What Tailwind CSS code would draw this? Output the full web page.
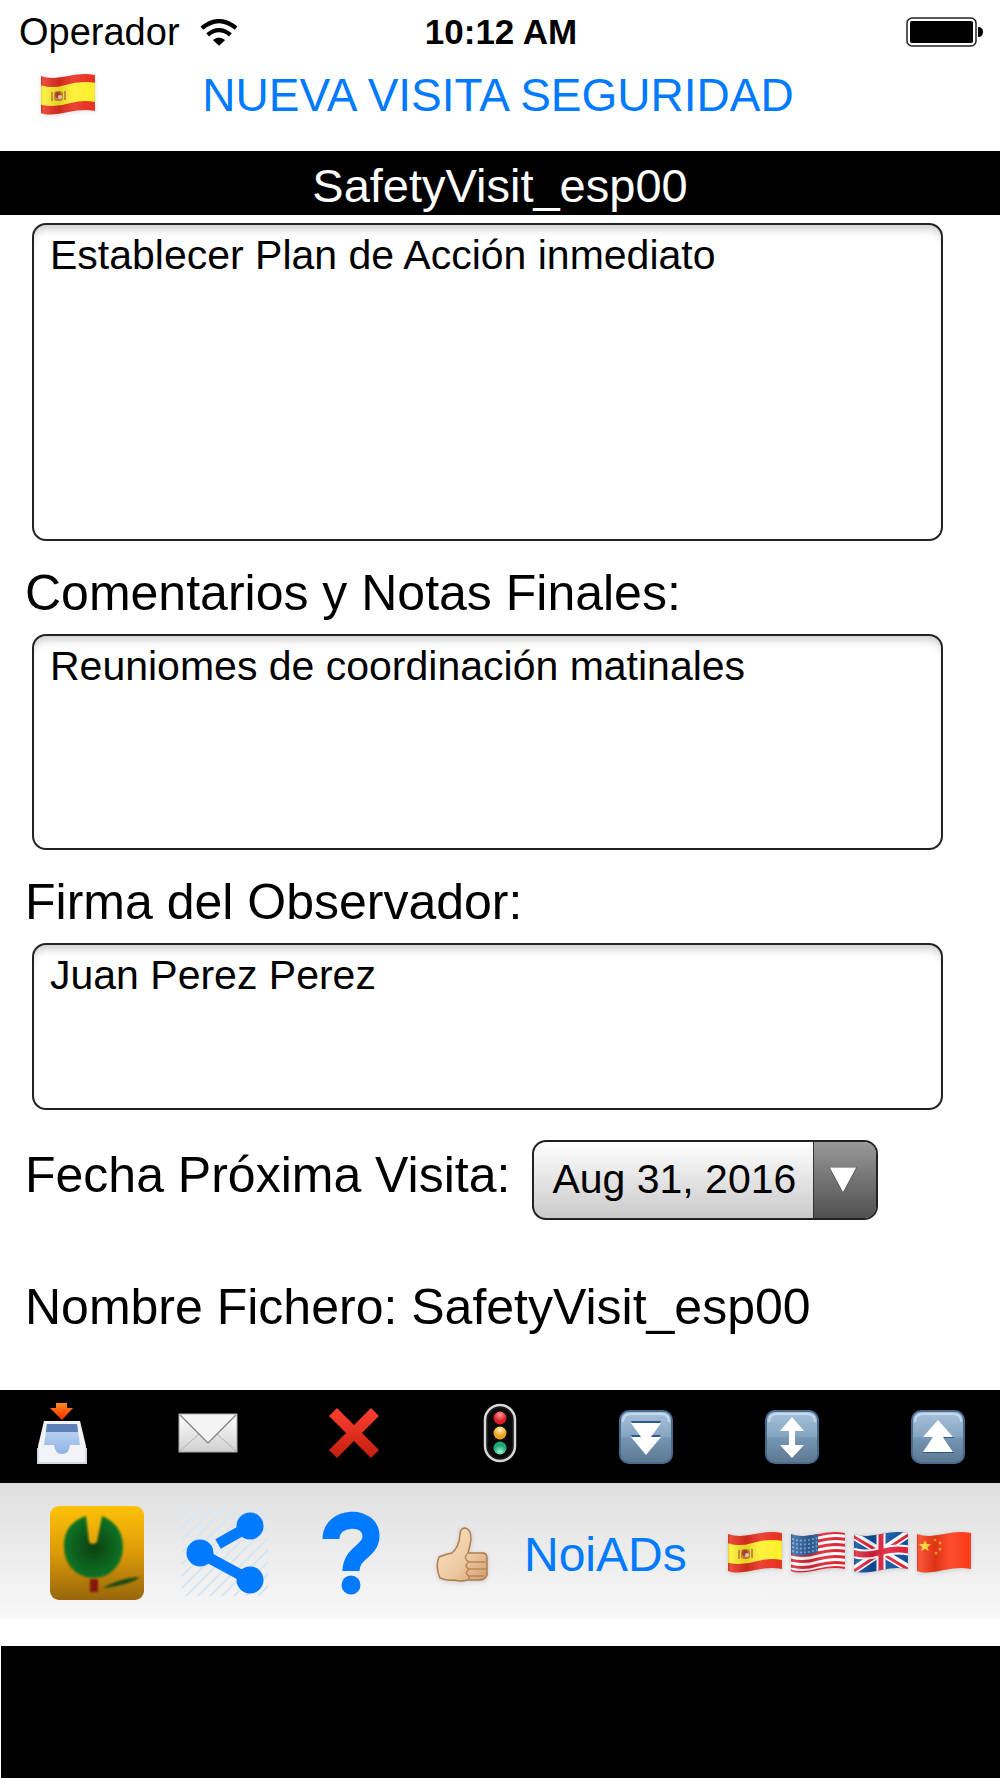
<!DOCTYPE html>
<html lang="es">
<head>
    <meta charset="UTF-8">
    <meta name="viewport" content="width=device-width, initial-scale=1">
    <title>SafetyVisit - Nueva Visita Seguridad</title>
    <script src="https://cdn.jsdelivr.net/npm/@tailwindcss/browser@4"></script>
</head>
<body class="min-h-screen flex flex-col bg-white text-black font-['Liberation_Sans',Arial,sans-serif]">

    <!-- Shared flag and button artwork -->
    <svg class="absolute w-0 h-0" aria-hidden="true" xmlns="http://www.w3.org/2000/svg">
        <defs>
            <path id="wave" d="M-2 3 C8 7 18 6 28 3 S46 -1 58 2" fill="none" />
            <clipPath id="flagClip">
                <path d="M1 3 C9 6 18 5 28 3 S46 0 55 2 V38 C46 36 38 37 28 39 S9 43 1 40 Z" />
            </clipPath>
            <linearGradient id="cloth" x1="0" x2="1" y1="0" y2="0">
                <stop offset="0" stop-color="#000" stop-opacity=".2" />
                <stop offset=".06" stop-color="#fff" stop-opacity=".15" />
                <stop offset=".35" stop-color="#000" stop-opacity=".12" />
                <stop offset=".6" stop-color="#fff" stop-opacity=".1" />
                <stop offset=".95" stop-color="#fff" stop-opacity="0" />
                <stop offset="1" stop-color="#000" stop-opacity=".3" />
            </linearGradient>
            <linearGradient id="tile" x1="0" x2="0" y1="0" y2="1">
                <stop offset="0" stop-color="#a9c3dc" />
                <stop offset=".48" stop-color="#86a5c2" />
                <stop offset=".52" stop-color="#7596b5" />
                <stop offset="1" stop-color="#5c7791" />
            </linearGradient>
            <symbol id="flag-es" viewBox="0 0 56 44">
                <g clip-path="url(#flagClip)">
                    <rect width="56" height="44" fill="#e8301f" />
                    <use href="#wave" y="18" stroke="#fff02a" stroke-width="19" />
                    <rect x="14" y="18" width="9" height="10" rx="3" fill="#e08a2a" />
                    <rect x="11" y="19" width="2" height="9" fill="#d09040" />
                    <rect x="24" y="18" width="2" height="9" fill="#d09040" />
                    <circle cx="18" cy="22" r="3" fill="#b8452c" />
                    <circle cx="20" cy="24" r="2" fill="#ecdcd8" />
                    <rect width="56" height="44" fill="url(#cloth)" />
                </g>
            </symbol>
            <symbol id="flag-us" viewBox="0 0 56 44">
                <g clip-path="url(#flagClip)">
                    <rect width="56" height="44" fill="#fff" />
                    <g stroke="#dd2230" stroke-width="3">
                        <use href="#wave" y="1" />
                        <use href="#wave" y="7" />
                        <use href="#wave" y="13" />
                        <use href="#wave" y="19" />
                        <use href="#wave" y="25" />
                        <use href="#wave" y="31" />
                        <use href="#wave" y="36" />
                    </g>
                    <path d="M0 0 H28 V21 C18 25 8 26 0 23 Z" fill="#2d62a0" />
                    <path d="M2 8 C12 11 20 9 27 7 M2 12 C12 15 20 13 27 11 M2 16 C12 19 20 17 27 15 M2 20 C12 23 20 21 27 19" fill="none" stroke="#7ba3cc" stroke-width="2" stroke-dasharray="2 2" />
                    <rect width="56" height="44" fill="url(#cloth)" />
                </g>
            </symbol>
            <symbol id="flag-gb" viewBox="0 0 56 44">
                <g clip-path="url(#flagClip)">
                    <rect width="56" height="44" fill="#0b4f9e" />
                    <path d="M-2 3 L58 39 M-2 41 L58 1" stroke="#fff" stroke-width="8" />
                    <path d="M-2 4 L58 40 M-2 42 L58 2" stroke="#e0203a" stroke-width="3" />
                    <use href="#wave" y="18" stroke="#fff" stroke-width="10" />
                    <path d="M28 0 V44" stroke="#fff" stroke-width="9" />
                    <use href="#wave" y="18" stroke="#e0203a" stroke-width="6" />
                    <path d="M28 0 V44" stroke="#e0203a" stroke-width="5" />
                    <rect width="56" height="44" fill="url(#cloth)" />
                </g>
            </symbol>
            <symbol id="flag-cn" viewBox="0 0 56 44">
                <g clip-path="url(#flagClip)">
                    <rect width="56" height="44" fill="#fb3a17" />
                    <path d="M9 9 L10.600 13 L15 13.300 L11.600 16 L12.800 20 L9 17.800 L5 20 L6.300 16 L3 13.300 L7.400 13 Z" fill="#ffe02a" />
                    <g fill="#f9a61c">
                        <circle cx="19" cy="9" r="1.500" />
                        <circle cx="24" cy="12" r="1.500" />
                        <circle cx="24" cy="18" r="1.500" />
                        <circle cx="20" cy="22" r="1.500" />
                    </g>
                    <rect width="56" height="44" fill="url(#cloth)" />
                </g>
            </symbol>
            <symbol id="tile-bg" viewBox="0 0 54 54">
                <rect x="1" y="1" width="52" height="52" rx="9" fill="url(#tile)" stroke="#4a6a8c" stroke-width="2" />
                <path d="M4 12 Q4 4 12 4 H42 Q50 4 50 12" fill="none" stroke="#c6d9ea" stroke-width="2" />
            </symbol>
        </defs>
    </svg>

    <!-- Status bar -->
    <div class="h-16 pl-[19px] pr-[17px] grid grid-cols-[1fr_auto_1fr] items-center">
        <div class="flex items-center gap-5 text-[38px]">
            <span>Operador</span>
            <svg class="w-[38px] h-[27px] shrink-0" viewBox="0 0 40 28" fill="none" stroke="#000" stroke-width="4.500">
                <path d="M2 9.500 Q20 -5.500 38 9.500" />
                <path d="M8 16.500 Q20 6.500 32 16.500" />
                <path d="M13.500 22 Q20 16.500 26.500 22 L20 28 Z" fill="#000" stroke="none" />
            </svg>
        </div>
        <span class="text-center text-[35px] font-bold">10:12 AM</span>
        <svg class="w-[77px] h-[30px] justify-self-end" viewBox="0 0 77 30">
            <rect x="1" y="1" width="69" height="28" rx="5" fill="none" stroke="#222" stroke-width="1.500" />
            <rect x="4" y="4" width="63" height="22" rx="2" fill="#000" />
            <path d="M72 10 Q77 10 77 15 T72 20 Z" fill="#000" />
        </svg>
    </div>

    <!-- Title -->
    <header>
        <div class="h-[87px] pb-[26px] px-10 flex items-center">
            <button type="button" aria-label="Idioma: español" class="shrink-0">
                <svg class="w-14 h-11 drop-shadow-sm"><use href="#flag-es" /></svg>
            </button>
            <h1 class="flex-1 pr-15 text-center text-[46px] leading-[60px] text-[#007aff]">NUEVA VISITA SEGURIDAD</h1>
        </div>
        <p class="h-16 pt-[6px] flex items-center justify-center bg-black text-white text-[47px]">SafetyVisit_esp00</p>
    </header>

    <!-- Visit form -->
    <form class="pt-2 text-[50px]">
        <div class="pl-8 pr-[57px]">
            <textarea aria-label="Plan de Acción" class="block w-full h-[318px] px-4 py-[7px] border-2 border-[#222] rounded-[14px] resize-none text-[41px] leading-[46px] shadow-[inset_0_8px_8px_-4px_#ccc]">Establecer Plan de Acción inmediato</textarea>
        </div>

        <label for="comentarios" class="block px-[25px] pt-3 leading-[81px]">Comentarios y Notas Finales:</label>
        <div class="pl-8 pr-[57px]">
            <textarea id="comentarios" class="block w-full h-[216px] px-4 py-[7px] border-2 border-[#222] rounded-[14px] resize-none text-[41px] leading-[46px] shadow-[inset_0_8px_8px_-4px_#ccc]">Reuniomes de coordinación matinales</textarea>
        </div>

        <label for="firma" class="block px-[25px] pt-3 leading-[81px]">Firma del Observador:</label>
        <div class="pl-8 pr-[57px]">
            <textarea id="firma" class="block w-full h-[167px] px-4 py-[7px] border-2 border-[#222] rounded-[14px] resize-none text-[41px] leading-[46px] shadow-[inset_0_8px_8px_-4px_#ccc]">Juan Perez Perez</textarea>
        </div>

        <div class="mt-[30px] px-[25px] flex items-start gap-[22px]">
            <label for="fecha" class="leading-[70px]">Fecha Próxima Visita:</label>
            <div class="relative">
                <select id="fecha" class="appearance-none block w-[346px] h-20 pl-[18px] pb-px border-2 border-[#222] rounded-[14px] bg-linear-to-b from-white to-[#cacaca] text-[41px]">
                    <option>Aug 31, 2016</option>
                </select>
                <span class="absolute inset-y-[2px] right-[2px] w-[63px] pr-1 flex items-center justify-center rounded-r-xl border-l border-[#333] bg-linear-to-b from-[#999] to-[#505050] pointer-events-none">
                    <svg class="w-7 h-[26px]" viewBox="0 0 28 26"><path d="M0 0 H28 L14 26 Z" fill="#fff" stroke="#555" stroke-width="1" /></svg>
                </span>
            </div>
        </div>

        <p class="px-[25px] pt-[58px] pb-[54px] leading-[58px]">Nombre Fichero: SafetyVisit_esp00</p>
    </form>

    <!-- Actions -->
    <nav class="h-[93px] px-8 pb-2 flex items-center justify-between bg-black">
        <button type="button" aria-label="Guardar" class="w-15 flex justify-center">
            <svg class="w-[50px] h-[62px]" viewBox="0 0 50 62">
                <defs>
                    <linearGradient id="arrow" x2="0" y2="1"><stop stop-color="#ff8a1c" /><stop offset="1" stop-color="#ff2a00" /></linearGradient>
                    <linearGradient id="tray" x2="0" y2="1"><stop stop-color="#6d93cc" /><stop offset=".3" stop-color="#b6cff0" /><stop offset="1" stop-color="#8fb2e6" /></linearGradient>
                </defs>
                <path d="M7 19 H43 L49 44 V61 H1 V44 Z" fill="#f1f3f6" />
                <path d="M10 22 H40 L43 43 H33 Q32 52 25 52 T17 43 H7 Z" fill="url(#tray)" />
                <path d="M10 22 H40 L41 30 H9 Z" fill="#5c80b8" />
                <path d="M1 46 V61 H49 V46" fill="none" stroke="#d5d9df" stroke-width="2" />
                <path d="M19 1 H30 V6 H36 L25 18 L13 6 H19 Z" fill="url(#arrow)" />
            </svg>
        </button>
        <button type="button" aria-label="Enviar" class="w-15 flex justify-center">
            <svg class="w-15 h-10" viewBox="0 0 60 40">
                <defs><linearGradient id="paper" x2="0" y2="1"><stop stop-color="#fff" /><stop offset="1" stop-color="#d0d0d0" /></linearGradient></defs>
                <rect x="1" y="1" width="58" height="38" fill="url(#paper)" stroke="#aaa" />
                <path d="M2 38 L21 21 M58 38 L39 21" stroke="#b0b0b0" stroke-width="1" />
                <path d="M2 2 L30 30 L58 2" fill="#f4f4f4" stroke="#8c8c8c" stroke-width="1.500" />
            </svg>
        </button>
        <button type="button" aria-label="Borrar" class="w-15 flex justify-center">
            <svg class="w-[52px] h-[52px]" viewBox="0 0 52 52">
                <defs><linearGradient id="cross" x2="0" y2="1"><stop stop-color="#fb4030" /><stop offset="1" stop-color="#c41e10" /></linearGradient></defs>
                <path d="M9 1 L26 18 L43 1 L51 9 L34 26 L51 43 L43 51 L26 34 L9 51 L1 43 L18 26 L1 9 Z" fill="url(#cross)" />
            </svg>
        </button>
        <button type="button" aria-label="Estado" class="w-15 flex justify-center">
            <svg class="w-[34px] h-[60px]" viewBox="0 0 34 60">
                <defs>
                    <radialGradient id="red" cy=".25"><stop stop-color="#ff9a9a" /><stop offset="1" stop-color="#dc1c24" /></radialGradient>
                    <radialGradient id="amber" cy=".25"><stop stop-color="#fff4b0" /><stop offset="1" stop-color="#f0a020" /></radialGradient>
                    <radialGradient id="green" cy=".8"><stop stop-color="#a0f4d0" /><stop offset="1" stop-color="#1faa74" /></radialGradient>
                </defs>
                <rect x="2" y="2" width="30" height="56" rx="15" fill="#1b1b1b" stroke="#d8d8d8" stroke-width="2.500" />
                <rect x="5" y="5" width="24" height="50" rx="12" fill="#080808" />
                <circle cx="17" cy="15" r="6.500" fill="url(#red)" />
                <circle cx="17" cy="30" r="6.500" fill="url(#amber)" />
                <circle cx="17" cy="45" r="6.500" fill="url(#green)" />
            </svg>
        </button>
        <button type="button" aria-label="Bajar" class="w-15 pt-2 flex justify-center">
            <svg class="w-[54px] h-[54px]" viewBox="0 0 54 54">
                <use href="#tile-bg" />
                <path d="M12 11 H42 L33 25 H42 L27 44 L12 25 H21 Z" fill="#2f5a85" />
                <path d="M12 13 H42 L32 27 H42 L27 45 L12 27 H22 Z" fill="#fff" />
            </svg>
        </button>
        <button type="button" aria-label="Desplazar" class="w-15 pt-2 flex justify-center">
            <svg class="w-[54px] h-[54px]" viewBox="0 0 54 54">
                <use href="#tile-bg" />
                <path d="M27 7 L39 21 H30 V35 H39 L27 48 L15 35 H24 V21 H15 Z" fill="#fff" />
            </svg>
        </button>
        <button type="button" aria-label="Subir" class="w-15 pt-2 flex justify-center">
            <svg class="w-[54px] h-[54px]" viewBox="0 0 54 54">
                <use href="#tile-bg" />
                <path d="M27 13 L43 28 H33 L43 43 H12 L22 28 Z" fill="#2f5a85" />
                <path d="M27 10 L42 27 H32 L42 42 H12 L22 27 H12 Z" fill="#fff" />
            </svg>
        </button>
    </nav>

    <!-- Footer bar -->
    <footer class="h-[135px] pt-1 pl-[50px] pr-7 flex items-center gap-9 bg-linear-to-b from-[#dfdfdf] to-[#f8f8f8]">
        <button type="button" aria-label="Inicio" class="shrink-0">
            <svg class="w-[94px] h-[94px]" viewBox="0 0 94 94">
                <defs>
                    <linearGradient id="gold" x2="0" y2="1"><stop stop-color="#ffc20a" /><stop offset=".5" stop-color="#dc9a08" /><stop offset="1" stop-color="#96660c" /></linearGradient>
                    <radialGradient id="leaf"><stop stop-color="#0b4013" /><stop offset="1" stop-color="#0a7324" /></radialGradient>
                    <filter id="soft"><feGaussianBlur stdDeviation="1" /></filter>
                </defs>
                <rect width="94" height="94" rx="9" fill="url(#gold)" />
                <g filter="url(#soft)">
                    <path d="M36 10 Q14 17 14 40 C14 60 28 72 44 72 C61 72 73 58 73 40 Q72 18 52 10 L47 36 Q43 40 39 36 Z" fill="url(#leaf)" />
                    <rect x="40" y="73" width="8" height="13" fill="#85160a" />
                    <path d="M53 82 Q70 72 90 71 Q80 79 53 82 Z" fill="#174a17" />
                </g>
            </svg>
        </button>
        <button type="button" aria-label="Compartir" class="shrink-0">
            <svg class="w-[90px] h-[94px]" viewBox="0 0 90 94">
                <defs>
                    <pattern id="hatch" width="12" height="12" patternUnits="userSpaceOnUse">
                        <path d="M-3 3 L3 -3 M0 12 L12 0 M9 15 L15 9" stroke="#d8e6f3" stroke-width="2" />
                    </pattern>
                </defs>
                <rect x="2" y="2" width="86" height="88" fill="url(#hatch)" />
                <path d="M38 38 L70 20 M20 47 L70 74" stroke="#007aff" stroke-width="11" />
                <circle cx="20" cy="47" r="13.500" fill="#007aff" />
                <circle cx="70" cy="20" r="13.500" fill="#007aff" />
                <circle cx="70" cy="74" r="13.500" fill="#007aff" />
            </svg>
        </button>
        <button type="button" aria-label="Ayuda" class="shrink-0 w-[86px] pl-1 flex justify-center">
            <svg class="w-[58px] h-[86px]" viewBox="0 0 58 86">
                <path d="M9 29 C9 5 49 4 49 26 C49 42 29 42 29 61" fill="none" stroke="#007aff" stroke-width="17" />
                <circle cx="29" cy="75" r="9.500" fill="#007aff" />
            </svg>
        </button>
        <button type="button" aria-label="Me gusta" class="shrink-0 w-15 pt-1 flex justify-end">
            <svg class="w-[52px] h-14 drop-shadow-sm" viewBox="0 0 52 56">
                <defs><linearGradient id="skin" x2="1" y2="1"><stop stop-color="#f8e4c6" /><stop offset=".6" stop-color="#edc9a0" /><stop offset="1" stop-color="#d09a6c" /></linearGradient></defs>
                <path d="M3 30 Q10 27 16 26 Q23 20 24 8 Q24 1 29 1 Q35 2 35 12 Q34 20 32 26 H47 Q51 26 51 31 V48 Q49 53 44 53 H31 Q25 55 18 53 Q12 54 4 51 Q-1 40 3 30 Z" fill="url(#skin)" stroke="#b07c50" stroke-width="1.500" />
                <path d="M31 27 Q27 31 33 35 H50 M33 35 Q27 39 33 42 H50 M33 42 Q28 46 33 49 H48 M33 49 Q32 52 35 53" fill="none" stroke="#b9865c" stroke-width="1.500" />
            </svg>
        </button>
        <a href="#noiads" class="pt-1 text-[48px] text-[#007aff]">NoiADs</a>
        <div class="ml-auto shrink-0 flex gap-[7px]">
            <button type="button" aria-label="Español"><svg class="w-14 h-11 drop-shadow-sm"><use href="#flag-es" /></svg></button>
            <button type="button" aria-label="English (US)"><svg class="w-14 h-11 drop-shadow-sm"><use href="#flag-us" /></svg></button>
            <button type="button" aria-label="English (UK)"><svg class="w-14 h-11 drop-shadow-sm"><use href="#flag-gb" /></svg></button>
            <button type="button" aria-label="中文"><svg class="w-14 h-11 drop-shadow-sm"><use href="#flag-cn" /></svg></button>
        </div>
    </footer>

    <!-- Ad banner slot -->
    <div class="mt-7 ml-px flex-1 min-h-20 bg-black"></div>

</body>
</html>
